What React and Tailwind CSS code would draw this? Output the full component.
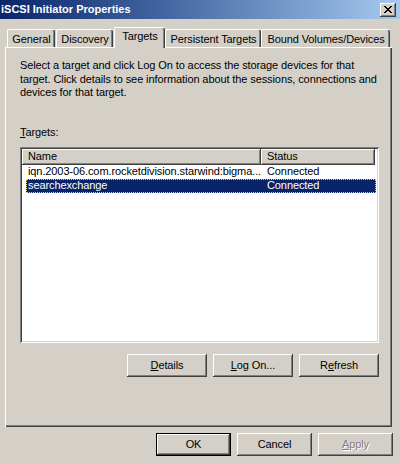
import React from "react";

const raised =
  "shadow-[inset_-1px_-1px_0_#404040,inset_1px_1px_0_#ffffff,inset_-2px_-2px_0_#808080]";

function Btn({ children, w = "w-[80px]", extra = "" }) {
  return (
    <div
      className={`${w} h-[23px] bg-[#d4d0c8] flex items-center justify-center ${raised} ${extra}`}
    >
      {children}
    </div>
  );
}

function Tab({ label, w, selected, ml = "" }) {
  if (selected) {
    return (
      <div
        className={`${w} ${ml} h-[21px] mb-[-1px] relative z-10 bg-[#d4d0c8] border-l border-t border-white rounded-tl-[2px] rounded-tr-[2px] shadow-[inset_-1px_0_0_#404040,inset_-2px_0_0_#808080] flex items-start justify-center pt-[2px]`}
      >
        {label}
      </div>
    );
  }
  return (
    <div
      className={`${w} ${ml} h-[18px] bg-[#d4d0c8] border-l border-t border-white rounded-tl-[2px] rounded-tr-[2px] shadow-[inset_-1px_0_0_#404040,inset_-2px_0_0_#808080] flex items-start justify-center pt-[3px]`}
    >
      {label}
    </div>
  );
}

export default function App() {
  return (
    <div className="w-[400px] h-[464px] bg-[#d4d0c8] font-['Liberation_Sans',Arial,sans-serif] text-[11px] leading-[13px] tracking-[-0.1px] text-black flex flex-col overflow-hidden">
      {/* Title bar */}
      <div className="h-[19px] bg-gradient-to-r from-[#0a246a] to-[#a6caf0] flex items-center justify-between pl-[1px] pr-[4px]">
        <span className="text-white font-bold text-[11px] leading-[13px] tracking-normal">
          iSCSI Initiator Properties
        </span>
        <div
          className={`w-[16px] h-[14px] bg-[#d4d0c8] ${raised} flex items-center justify-center`}
        >
          <svg width="8" height="7" viewBox="0 0 8 7" className="mb-[1px] mr-[1px]">
            <path
              d="M0 0h2v1h1v1h2v-1h1v-1h2v1h-1v1h-1v1h-1v1h1v1h1v1h1v1h-2v-1h-1v-1h-2v1h-1v1h-2v-1h1v-1h1v-1h1v-1h-1v-1h-1v-1h-1z"
              fill="#000"
            />
          </svg>
        </div>
      </div>

      {/* Tabs */}
      <div className="mt-[8px] h-[20px] flex items-end">
        <Tab label="General" w="w-[48px]" ml="ml-[7px]" />
        <Tab label="Discovery" w="w-[57px]" ml="ml-[1px]" />
        <Tab label="Targets" w="w-[51px]" ml="ml-[1px]" selected />
        <Tab label="Persistent Targets" w="w-[96px]" />
        <Tab label="Bound Volumes/Devices" w="w-[129px]" />
      </div>

      {/* Panel */}
      <div className="ml-[5px] w-[387px] h-[380px] border-l border-t border-white shadow-[inset_-1px_-1px_0_#404040,inset_-2px_-2px_0_#808080] flex flex-col pl-[14px] pr-[13px] pt-[11px]">
        <p className="leading-[13.5px] whitespace-nowrap">
          Select a target and click Log On to access the storage devices for that
          <br />
          target. Click details to see information about the sessions, connections and
          <br />
          devices for that target.
        </p>
        <div className="mt-[26px]">
          <span className="underline">T</span>argets:
        </div>
        <div className="mt-[8px] h-[196px] bg-white shadow-[inset_1px_1px_0_#808080,inset_-1px_-1px_0_#ffffff,inset_2px_2px_0_#404040,inset_-2px_-2px_0_#d4d0c8] p-[2px] flex flex-col">
          <div className="flex h-[16px] shrink-0">
            <div className={`w-[239px] h-full bg-[#d4d0c8] ${raised} pl-[6px] flex items-center`}>
              Name
            </div>
            <div className={`w-[114px] h-full bg-[#d4d0c8] ${raised} pl-[6px] flex items-center`}>
              Status
            </div>
          </div>
          <div className="ml-[4px] mr-[1px] h-[14px] flex items-center">
            <div className="w-[235px] pl-[2px] whitespace-nowrap">
              iqn.2003-06.com.rocketdivision.starwind:bigma...
            </div>
            <div className="pl-[6px]">Connected</div>
          </div>
          <div className="ml-[4px] mr-[1px] h-[14px] flex items-center bg-[#0a246a] text-white border border-dotted border-[#e8d28a]">
            <div className="w-[234px] pl-[1px] whitespace-nowrap">
              searchexchange
            </div>
            <div className="pl-[6px]">Connected</div>
          </div>
        </div>
        <div className="mt-[11px] flex justify-end gap-[6px]">
          <Btn>
            <span>
              <span className="underline">D</span>etails
            </span>
          </Btn>
          <Btn>
            <span>
              <span className="underline">L</span>og On...
            </span>
          </Btn>
          <Btn>
            <span>
              R<span className="underline">e</span>fresh
            </span>
          </Btn>
        </div>
      </div>

      {/* Bottom buttons */}
      <div className="mt-[6px] flex justify-end gap-[6px] pr-[7px]">
        <div className="w-[75px] h-[23px] border border-black bg-[#d4d0c8] flex items-center justify-center shadow-[inset_-1px_-1px_0_#404040,inset_1px_1px_0_#ffffff,inset_-2px_-2px_0_#808080]">
          OK
        </div>
        <Btn w="w-[75px]">Cancel</Btn>
        <Btn w="w-[75px]">
          <span className="text-[#808080] [text-shadow:1px_1px_0_#ffffff]">
            <span className="underline">A</span>pply
          </span>
        </Btn>
      </div>
    </div>
  );
}
